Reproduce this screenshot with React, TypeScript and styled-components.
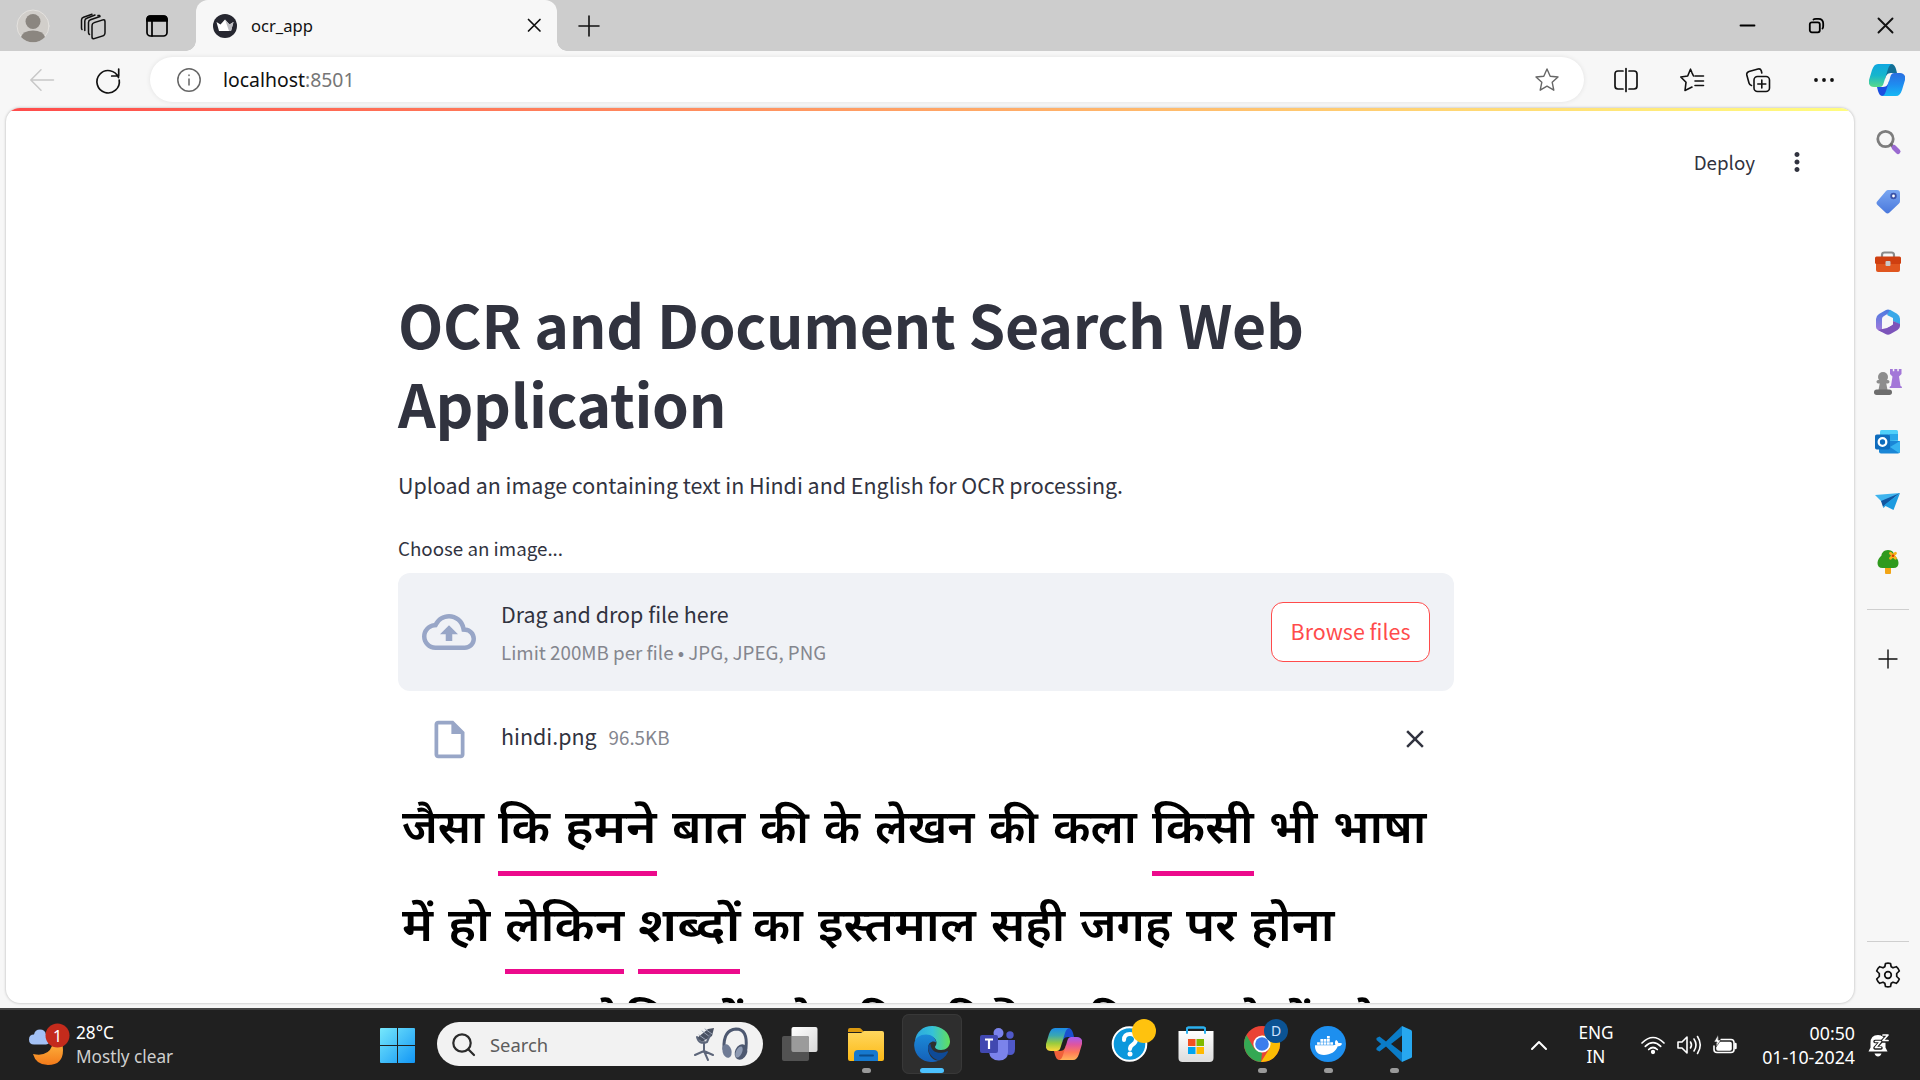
import React from 'react';
import styled, { createGlobalStyle } from 'styled-components';
import { MdOutlineCloudUpload, MdOutlineInsertDriveFile, MdMoreVert, MdClose } from 'react-icons/md';
import { FaDocker } from 'react-icons/fa';

const ui = '"Noto Sans", "Open Sans", sans-serif';
const page = '"Noto Sans CJK JP", "Noto Sans", sans-serif';

const GlobalStyle = createGlobalStyle`
  * { box-sizing: border-box; }
  body { margin: 0; background: #f7f7f7; overflow: hidden; }
  svg { display: block; flex: none; }
`;

const Screen = styled.div`
  width: 1920px; height: 1080px; display: flex; flex-direction: column;
  overflow: hidden; background: #f7f7f7; font-family: ${ui};
`;

/* ---------- browser chrome ---------- */
const TabStrip = styled.header`
  height: 51px; flex: none; display: flex; background: #cdcdcd;
`;
const Slot = styled.div<{ $w: number }>`
  width: ${p => p.$w}px; height: 100%; flex: none; display: flex;
  align-items: center; justify-content: center;
`;
const Tab = styled.div`
  width: 361px; height: 51px; margin-left: 3px; padding: 0 17px; display: flex; align-items: center;
  background: #f7f7f7; border-radius: 12px 12px 0 0; position: relative;
  &::before, &::after {
    content: ''; position: absolute; bottom: 0; width: 10px; height: 10px;
  }
  &::before { left: -10px; background: radial-gradient(circle at 0 0, transparent 9.5px, #f7f7f7 10px); }
  &::after { right: -10px; background: radial-gradient(circle at 100% 0, transparent 9.5px, #f7f7f7 10px); }
`;
const TabTitle = styled.span`
  flex: 1; margin-left: 14px; font-size: 16.6px; line-height: 22px; color: #111;
`;
const Spacer = styled.div`flex: 1;`;
const Toolbar = styled.nav`
  height: 57px; flex: none; display: flex; align-items: center; background: #f7f7f7;
`;
const AddressBar = styled.div`
  width: 1434px; height: 45px; margin-left: 18px; padding: 0 25px 0 27px; display: flex; align-items: center;
  border-radius: 23px; background: #fff; box-shadow: 0 0 5px rgba(0,0,0,.09);
`;
const Url = styled.span`
  flex: 1; margin-left: 22px; font-size: 19.4px; line-height: 26px; color: #101010;
  span { color: #767676; }
`;
const Middle = styled.div`height: 900px; flex: none; display: flex;`;
const Frame = styled.div`flex: 1; padding: 0 1px 5px 6px; display: flex;`;
const PageCard = styled.main`
  flex: 1; height: 895px; overflow: hidden; background: #fff;
  border-radius: 14px; box-shadow: 0 0 3px rgba(0,0,0,.28);
  display: flex; flex-direction: column;
`;
const Decoration = styled.div`
  height: 3px; flex: none; background: linear-gradient(90deg, #ff4b4b, #fffd80);
`;
const AppHeader = styled.div`
  height: 102px; flex: none; padding-right: 42px; display: flex; align-items: center; justify-content: flex-end;
`;
const Deploy = styled.span`
  margin-right: 27px; font: 400 18.75px/28px ${page}; color: #31333f;
`;

/* ---------- sidebar ---------- */
const Sidebar = styled.aside`
  width: 65px; flex: none; display: flex; flex-direction: column; align-items: center;
`;
const SideItem = styled.div<{ $h?: number }>`
  height: ${p => p.$h ?? 60}px; flex: none; display: flex; align-items: center; justify-content: center;
`;
const Rule = styled.div`width: 42px; height: 1px; flex: none; background: #cfcfcf;`;

/* ---------- page content ---------- */
const Column = styled.section`
  width: 1056px; margin-left: 392px; display: flex; flex-direction: column;
  font-family: ${page}; color: #31333f;
`;
const Title = styled.h1`
  margin: 71px 0 0; font-size: 58.9px; line-height: 79.2px; font-weight: 700; letter-spacing: -0.3px;
`;
const Lead = styled.p`margin: 24px 0 0; font-size: 21.45px; line-height: 38px;`;
const Label = styled.label`margin-top: 28px; font-size: 18.75px; line-height: 32px;`;
const Dropzone = styled.div`
  height: 118px; margin-top: 9px; padding: 0 24px; display: flex; align-items: center;
  border-radius: 12px; background: #f0f2f6;
`;
const DropText = styled.div`
  flex: 1; margin-left: 25px; display: flex; flex-direction: column; gap: 1px;
`;
const Strong = styled.span`font-size: 21.45px; line-height: 38px; color: #31333f;`;
const Small = styled.span`font-size: 18.75px; line-height: 36px; color: #84868e;`;
const Browse = styled.button`
  width: 159px; height: 60px; padding: 0 0 2px; border: 1.5px solid #ff4b4b; border-radius: 12px;
  background: #fff; color: #ff4b4b; font: 400 21.45px/36px ${page};
`;
const FileRow = styled.div`
  height: 66px; margin-top: 15px; padding: 0 24px 0 29px; display: flex; align-items: center;
`;
const FileName = styled.div`
  flex: 1; margin: 0 0 6px 29px; display: flex; align-items: baseline; gap: 12px;
`;

/* ---------- the uploaded picture ---------- */
const Scan = styled.figure`
  margin: 21px 0 0; padding-left: 4px; display: flex; flex-direction: column; filter: blur(0.7px);
`;
const ScanLine = styled.div`height: 98px; flex: none; display: flex; align-items: flex-start;`;
const Phrase = styled.div<{ $ml: number; $under?: boolean }>`
  height: 83px; margin-left: ${p => p.$ml}px; display: flex; gap: 15px;
  border-bottom: 5px solid ${p => (p.$under ? '#ec0a8c' : 'transparent')};
`;
const Word = styled.span<{ $w: number }>`
  width: ${p => p.$w}px; flex: none; white-space: nowrap; color: #000;
  font: 600 46px/78px "Noto Sans Devanagari", "Noto Sans", sans-serif;
  span { display: inline-block; transform-origin: 0 50%; }
`;

/* ---------- taskbar ---------- */
const Taskbar = styled.footer`
  height: 72px; flex: none; display: flex; align-items: stretch;
  background: #202020; border-top: 2px solid #444;
`;
const Weather = styled.div`
  width: 347px; padding-left: 28px; display: flex; align-items: center; gap: 10px;
`;
const Lines = styled.div<{ $align?: string; $size?: number }>`
  display: flex; flex-direction: column; text-align: ${p => p.$align ?? 'left'};
  font-size: ${p => p.$size ?? 17.2}px; line-height: 24px; color: #fff; white-space: nowrap;
`;
const Muted = styled.span`color: #cfcfcf;`;
const SearchPill = styled.div`
  width: 326px; height: 44px; margin: 12px 4px 0 13px; padding: 0 14px 0 15px; display: flex; align-items: center;
  border-radius: 22px; background: #f2f2f2;
`;
const SearchText = styled.span`flex: 1; margin-left: 15px; font-size: 18.4px; color: #5c5c5c;`;
const AppTile = styled.div<{ $active?: boolean }>`
  width: 60px; height: 60px; margin: 4px 3px 0; border-radius: 7px; flex: none;
  display: flex; flex-direction: column; align-items: center; padding-top: 12px;
  background: ${p => (p.$active ? '#2e2e2e' : 'transparent')};
  box-shadow: ${p => (p.$active ? 'inset 0 0 0 1px #383838' : 'none')};
`;
const Marker = styled.i<{ $active?: boolean }>`
  width: ${p => (p.$active ? 24 : 9)}px; height: 5px; margin-top: 6px; border-radius: 3px;
  background: ${p => (p.$active ? '#4cc2ff' : '#9a9a9a')};
`;

type Ink = { w: number; h: number; vb?: string; children: React.ReactNode; stroke?: string; sw?: number };
const Draw = ({ w, h, vb, children, stroke, sw = 1.5 }: Ink) => (
  <svg width={w} height={h} viewBox={vb ?? `0 0 ${w} ${h}`} fill="none" overflow="visible"
    stroke={stroke} strokeWidth={stroke ? sw : undefined} strokeLinecap="round" strokeLinejoin="round">
    {children}
  </svg>
);

const Plus = ({ s, sw = 1.6 }: { s: number; sw?: number }) => (
  <Draw w={s} h={s} stroke="#111" sw={sw}><path d={`M${s / 2} 0V${s}M0 ${s / 2}H${s}`} /></Draw>
);
const Cross = ({ s, sw = 1.7 }: { s: number; sw?: number }) => (
  <Draw w={s} h={s} stroke="#111" sw={sw}><path d={`M0.5 0.5L${s - 0.5} ${s - 0.5}M${s - 0.5} 0.5L0.5 ${s - 0.5}`} /></Draw>
);

/* copilot ribbon, shared by the toolbar and the taskbar */
const Ribbon = ({ id, w, h, a, b, c, d }: { id: string; w: number; h: number; a: string[]; b: string[]; c: string; d: string }) => (
  <svg width={w} height={h} viewBox="0 0 36 32">
    <defs>
      <linearGradient id={id + 'a'} x1="0" y1="0" x2="0" y2="1">{a.map((x, i) => <stop key={i} offset={i / (a.length - 1)} stopColor={x} />)}</linearGradient>
      <linearGradient id={id + 'b'} x1="0" y1="0" x2="0" y2="1">{b.map((x, i) => <stop key={i} offset={i / (b.length - 1)} stopColor={x} />)}</linearGradient>
    </defs>
    <path d="M17 0h5c3 0 4 2 5 5l1 4h-6c-4 0-5 3-6 6z" fill={c} />
    <path d="M19 32h-5c-3 0-4-2-5-5l-1-4h6c4 0 5-3 6-6z" fill={d} />
    <path d="M9 0h15c-3 0-4 2-5 5l-4 13c-1 4-2 5-5 5H5c-4 0-6-3-5-7L3 6C4.500 2 6 0 9 0z" fill={`url(#${id}a)`} />
    <path d="M27 32H12c3 0 4-2 5-5l4-13c1-4 2-5 5-5h5c4 0 6 3 5 7l-3 10c-1.500 4-3 6-6 6z" fill={`url(#${id}b)`} />
  </svg>
);

const Star = 'M12 1l3.200 7.200 7.800.8-5.800 5.300 1.600 7.900L12 18.200l-6.800 4 1.600-7.900L1 9l7.800-.8z';

const sideIcons = [
  <Draw w={26} h={26} key="search">
    <circle cx="10.500" cy="10" r="7.700" stroke="#7d7d7d" strokeWidth="2.800" />
    <path d="M16 15.500l3 3" stroke="#6a6a6a" strokeWidth="3" /><path d="M19 18.500l4 4" stroke="#9a6ad0" strokeWidth="5" />
  </Draw>,
  <Draw w={26} h={26} key="tag">
    <defs><linearGradient id="tg" x1="0" y1="0" x2="0" y2="1"><stop stopColor="#7aa7f2" /><stop offset="1" stopColor="#4a78dc" /></linearGradient></defs>
    <path d="M13 1h9q3 0 3 3v8q0 1.500-1 2.500l-9.500 9q-2 2-4 0l-8-7.500q-2-2 0-4L11 2q1-1 2-1z" fill="url(#tg)" />
    <circle cx="18.500" cy="7" r="2.300" fill="#fff" stroke="#3a52a8" strokeWidth="1.800" />
  </Draw>,
  <Draw w={28} h={22} key="tools">
    <path d="M8 6V4q0-2.500 2.500-2.500h7Q20 1.500 20 4v2" stroke="#8a8a8a" strokeWidth="2.200" />
    <rect x="2" y="10" width="24" height="11" rx="2" fill="#e0561f" /><rect x="1" y="5.500" width="26" height="7.500" rx="1.500" fill="#cf3f10" />
    <rect x="11.500" y="10" width="5" height="5" rx="1" fill="#c9c9c9" />
  </Draw>,
  <Draw w={24} h={26} key="m365">
    <defs><linearGradient id="m1" x1="0" y1="0" x2="0" y2="1"><stop stopColor="#4a7be0" /><stop offset="1" stopColor="#a779dc" /></linearGradient></defs>
    <path d="M10 1L3 5Q0 7 0 10v8q0 2 2 3l4 2V10q0-2 2-3l6-3.500V1q-2-1-4 0z" fill="url(#m1)" />
    <path d="M14 .8l7 4q3 2 3 5v6L17 12V9L11 6z" fill="#39a8e8" /><path d="M24 15v2q0 2.500-2.500 4l-7 4q-2.500 1.300-5 0L2 21l9-2 6-3.500V12z" fill="#7c54ba" />
    <circle cx="12" cy="13" r="4.700" fill="#f7f7f7" />
  </Draw>,
  <Draw w={28} h={28} key="games">
    <path d="M16 1v5l2.500 2.500L17 18q-1.500 0-1.500 2H28q0-2-1.500-2L25 8.500 27.500 6V1h-2.700v2.300h-1.500V1h-3v2.300h-1.500V1z" fill="#a377d8" />
    <g fill="#8d8d8d"><circle cx="9" cy="9" r="5" /><rect x="2.500" y="12" width="13" height="3.500" rx="1.700" /><path d="M6 14h6l1.500 8h-9z" /></g>
    <rect x="0" y="21.500" width="18" height="5.500" rx="2.700" fill="#6d6d6d" />
  </Draw>,
  <Draw w={25} h={24} key="outlook">
    <rect x="5" y="0" width="18" height="14" rx="1.500" fill="#50d0fa" /><rect x="14" y="4" width="9" height="6" fill="#2aa7ea" />
    <path d="M4 10l21 1v10.500q0 2-2 2H6q-2 0-2-2z" fill="#1a86d6" /><path d="M25 11l-10 6 9 6q1-.5 1-1.500z" fill="#36b3f0" />
    <rect x="0" y="4.500" width="15" height="15" rx="1.800" fill="#0f6cbd" /><circle cx="7.500" cy="12" r="3.800" stroke="#fff" strokeWidth="2.300" />
  </Draw>,
  <Draw w={26} h={20} key="plane">
    <path d="M0 3l25-2-17 10z" fill="#3fb4ee" /><path d="M6 9L25 1 8 15z" fill="#1256a0" /><path d="M8 15l2.500-3L25 1l-6.500 17-8-4-2 2z" fill="#1d9be0" />
  </Draw>,
  <Draw w={22} h={26} key="tree">
    <path d="M8 17h6v7q0 1-1 1H9q-1 0-1-1z" fill="#f2a516" />
    <path d="M11 1c4 0 6.500 3 6.500 5.500C19.500 8 21.500 11 21.500 14q0 5-5 5H5.500q-5 0-5-5c0-3 2-6 4-7.500C4.500 4 7 1 11 1z" fill="#2f9a1e" />
    <path d="M13.500 4.300l5 5m0-5l-5 5" stroke="#f8b21a" strokeWidth="2.800" /><circle cx="16" cy="6.800" r="1.300" fill="#d83b01" />
  </Draw>,
];

/* natural width of each glyph run is stretched to the width it has in the scan */
const Hindi = ({ w, children }: { w: number; children: string }) => {
  const ref = React.useRef<HTMLSpanElement>(null);
  const [k, setK] = React.useState(1);
  React.useLayoutEffect(() => {
    if (ref.current) setK(w / ref.current.offsetWidth);
  }, [w]);
  return <Word $w={w}><span ref={ref} style={{ transform: `scaleX(${k})` }}>{children}</span></Word>;
};

type Run = { ml: number; under?: boolean; words: [string, number][] };
const scan: Run[][] = [
  [
    { ml: 0, words: [['जैसा', 82]] },
    { ml: 14, under: true, words: [['कि', 52], ['हमने', 92]] },
    { ml: 15, words: [['बात', 73], ['की', 49], ['के', 36], ['लेखन', 99], ['की', 49], ['कला', 84]] },
    { ml: 15, under: true, words: [['किसी', 102]] },
    { ml: 15, words: [['भी', 49], ['भाषा', 94]] },
  ],
  [
    { ml: 0, words: [['में', 31], ['हो', 42]] },
    { ml: 15, under: true, words: [['लेकिन', 119]] },
    { ml: 14, under: true, words: [['शब्दों', 102]] },
    { ml: 13, words: [['का', 50], ['इस्तमाल', 158], ['सही', 74], ['जगह', 91], ['पर', 50], ['होना', 84]] },
  ],
  [
    { ml: 192, words: [['के', 36]] },
    { ml: -4, words: [['कि', 52]] },
    { ml: 34, words: [['में', 31]] },
    { ml: 45, words: [['के', 36]] },
    { ml: 22, words: [['की', 49]] },
    { ml: 39, words: [['की', 49]] },
    { ml: 1, words: [['है', 42]] },
    { ml: 51, words: [['की', 49]] },
    { ml: 111, words: [['के', 36]] },
    { ml: 6, words: [['में', 31]] },
    { ml: 41, words: [['के', 36]] },
  ],
];

const EdgeLogo = () => (
  <svg width="36" height="36" viewBox="0 0 36 36">
    <defs>
      <linearGradient id="e1" x1="0" x2="1"><stop stopColor="#2aa6e0" /><stop offset=".5" stopColor="#35c1d8" /><stop offset="1" stopColor="#62e05a" /></linearGradient>
      <linearGradient id="e2" x1="0" y1="0" x2="0" y2="1"><stop stopColor="#1b8ad8" /><stop offset="1" stopColor="#1560b8" /></linearGradient>
    </defs>
    <path d="M1 15C2 6 9 0 18 0c10 0 18 7 18 15.500 0 5-4 8.500-9 8.500-4 0-6-1.500-6-3 0-1 1.500-1.500 1.500-4.500 0-3.500-3.500-6.500-8-6.500C8 10 3 12 1 15z" fill="url(#e1)" />
    <path d="M.2 20C-.3 12 6 8.500 12 8.500c5.500 0 10 3.500 10 8-2-2-8-1-8 6 0 6 5 13 11 12-10 4.500-24-1-24.800-14.500z" fill="url(#e2)" />
    <path d="M14 21c0 7 5.500 12 11 13.500 4-1.300 7.500-5 9-8.500.3-.8-.5-1-1-.7C26 28.500 17 27 16.500 18q-2.500.5-2.500 3z" fill="#0f4a96" />
  </svg>
);

const apps: { id: string; icon: React.ReactNode; run?: boolean; active?: boolean }[] = [
  { id: 'taskview', icon: <Draw w={36} h={36}><defs><linearGradient id="tv" x2="1" y2="1"><stop stopColor="#fff" /><stop offset="1" stopColor="#d8d8d8" /></linearGradient></defs><rect x="9.500" y="1" width="26" height="25" rx="2" fill="url(#tv)" /><rect x="0" y="10" width="27" height="25" rx="2" fill="#5c5c5c" fillOpacity=".85" /><path d="M9.500 10H25q2 0 2 2v14H11.500q-2 0-2-2z" fill="#9b9b9b" /></Draw> },
  { id: 'explorer', run: true, icon: <Draw w={36} h={36}><defs><linearGradient id="ex" x2="0" y2="1"><stop stopColor="#ffd75e" /><stop offset="1" stopColor="#fcb916" /></linearGradient></defs><path d="M0 4q0-2 2-2h9q1.500 0 2.500 1.200L16 6H0z" fill="#dc9a10" /><path d="M0 7h13l3-2h18q2 0 2 2v26q0 2-2 2H2q-2 0-2-2z" fill="url(#ex)" /><path d="M6 35V28q0-4 4-4h16q4 0 4 4v7z" fill="#1679cf" /><path d="M12 29.500h13" stroke="#0b4d8c" strokeWidth="2" /></Draw> },
  { id: 'edge', run: true, active: true, icon: <EdgeLogo /> },
  { id: 'teams', icon: <Draw w={36} h={36}><circle cx="18.500" cy="7" r="5" fill="#7b83eb" /><circle cx="30" cy="9" r="3.700" fill="#5059c9" /><path d="M26 14h9v9q0 6-5 6t-5-5z" fill="#5059c9" /><path d="M9 14h19v12q0 8.500-9 8.500T9 26z" fill="#7b83eb" /><rect x="0" y="9" width="18" height="18" rx="2" fill="#4148b0" /><path d="M5 13.500h8M9 13.500v9.500" stroke="#fff" strokeWidth="2.200" strokeLinecap="butt" /></Draw> },
  { id: 'copilot', icon: <Ribbon id="tc" w={36} h={36} a={['#1b8be8', '#3ba8b0', '#9bcc3c', '#ffd83a']} b={['#a45cf0', '#e0559f', '#ff7a58', '#ffb35a']} c="#1a4fd0" d="#f0603a" /> },
  { id: 'help', icon: <Draw w={36} h={36}><circle cx="17.500" cy="18" r="16.800" fill="#0b98dc" stroke="#fff" strokeWidth="2" /><path d="M12 14q0-6 6-6t6 5.500q0 3-3.500 5.200Q18 20.300 18 23" stroke="#fff" strokeWidth="4" /><circle cx="18" cy="28" r="2.500" fill="#fff" /><circle cx="32" cy="5" r="12" fill="#ffc20e" /></Draw> },
  { id: 'store', icon: <Draw w={36} h={36}><defs><linearGradient id="st" x2="0" y2="1"><stop stopColor="#fff" /><stop offset="1" stopColor="#dcdcdc" /></linearGradient></defs><path d="M9 8V3q0-1.500 1.500-1.500h15Q27 1.500 27 3v5" stroke="#2bb0ee" strokeWidth="2" /><path d="M0.500 5h35v27q0 4-4 4h-27q-4 0-4-4z" fill="url(#st)" /><path d="M9 7V3q0-1.500 1.500-1.500h15Q27 1.500 27 3v4" stroke="#2bb0ee" strokeWidth="2" /><path fill="#f25022" d="M10 13h7.500v7H10z" /><path fill="#7fba00" d="M18.500 13H26v7h-7.500z" /><path fill="#00a4ef" d="M10 21h7.500v7H10z" /><path fill="#ffb900" d="M18.500 21H26v7h-7.500z" /></Draw> },
  { id: 'chrome', run: true, icon: <Draw w={36} h={36}><circle cx="18" cy="18" r="18" fill="#ea4335" /><path d="M2.400 9L10.200 22.500 18 27l-1 9A18 18 0 0 1 2.400 9z" fill="#34a853" /><path d="M18 9.500h15.800A18 18 0 0 1 17 36l8.500-13.500z" fill="#fbbc04" /><circle cx="18" cy="18" r="8.600" fill="#fff" /><circle cx="18" cy="18" r="6.800" fill="#3b7ded" /><circle cx="32" cy="5" r="12" fill="#0b5394" /><text x="32" y="10" textAnchor="middle" fontSize="14" fill="#cfe2ff" fontFamily='"Noto Sans", sans-serif'>D</text></Draw> },
  { id: 'docker', run: true, icon: <Draw w={36} h={36}><circle cx="18" cy="18" r="18" fill="#1d8fef" /><g transform="translate(5 6)"><FaDocker size={27} color="#fff" /></g></Draw> },
  { id: 'vscode', run: true, icon: <Draw w={36} h={36}><path d="M26 0L10 15.500 3.500 10.500 0.500 12v2L5.200 18 0.500 22v2l3 1.500 6.500-5L26 36l2-9V9z" fill="#0a7cc7" /><path d="M26 9.500L15 18l11 8.500z" fill="#202020" /><path d="M26 0l9 4q1 .5 1 1.500v25q0 1-1 1.500l-9 4z" fill="#27a8f0" /></Draw> },
];

export default function App() {
  return (
    <Screen>
      <GlobalStyle />
      <TabStrip>
        <Slot $w={66}>
          <Draw w={34} h={34}><circle cx="17" cy="17" r="16" fill="#d1ceca" stroke="#e4e2df" /><circle cx="17" cy="12.500" r="7.500" fill="#8b8680" /><path d="M5 28Q7 21.500 17 21.500T29 28Q24 33.300 17 33.300T5 28z" fill="#8b8680" /></Draw>
        </Slot>
        <Slot $w={54}>
          <Draw w={24} h={24} stroke="#111"><rect x="11" y="7" width="13" height="16" rx="2.500" transform="skewY(-18) translate(0 6)" /><path d="M7.500 18.500V8.500q0-2 2-2.700L19 2.500q0-1.500-2-1M3.800 16.500V7q0-2 2-2.700L14 1M1 15.500q-.5-.5-.5-1.500V6q0-2 2-2.700L11 .3M7.500 18.500q0 1.500 1 2" /></Draw>
        </Slot>
        <Slot $w={73}>
          <Draw w={22} h={22} stroke="#000" sw={1.700}><rect x="1" y="1" width="20" height="20" rx="3.500" /><path d="M1 6V4.500Q1 1 4.500 1h13Q21 1 21 4.500V6z" fill="#000" /><path d="M6 6v15" /></Draw>
        </Slot>
        <Tab>
          <Draw w={24} h={24}><circle cx="12" cy="12" r="12" fill="#262730" /><path d="M3.500 8l4 2.500L12 5.500l4.500 5 4-2.500-2.500 9H6z" fill="#fff" /><path d="M12 5.500l4.500 5 4-2.500-2.500 9h-2z" fill="#bdbdc2" /></Draw>
          <TabTitle>ocr_app</TabTitle>
          <Cross s={12.500} />
        </Tab>
        <Slot $w={64}><Plus s={20} /></Slot>
        <Spacer />
        <Slot $w={69}><Draw w={15} h={15} stroke="#000" sw={1.800}><path d="M.5 7.500h14" /></Draw></Slot>
        <Slot $w={69}><Draw w={15} h={15} stroke="#000" sw={1.800}><rect x="0.800" y="4.300" width="10" height="10" rx="2" /><path d="M4.500 1.500Q5 .8 7 .8h2.500Q14.200.8 14.200 5.500V8q0 2-.7 2.500" /></Draw></Slot>
        <Slot $w={69}><Cross s={15} sw={1.900} /></Slot>
      </TabStrip>

      <Toolbar>
        <Slot $w={84}><Draw w={24} h={22} stroke="#c8c8c8"><path d="M23.500 11H.8M11 .8L.8 11 11 21.200" /></Draw></Slot>
        <Slot $w={48}><Draw w={24} h={24} stroke="#111" sw={1.700}><path d="M22.500 9.500A11.200 11.200 0 1 0 23.200 12M22.700 1v7h-7" /></Draw></Slot>
        <AddressBar>
          <Draw w={24} h={24} stroke="#666" sw={1.500}><circle cx="12" cy="12" r="11.200" /><path d="M12 11v6M12 7v.4" /></Draw>
          <Url>localhost<span>:8501</span></Url>
          <Draw w={24} h={24} stroke="#666" sw={1.400}><path d={Star} /></Draw>
        </AddressBar>
        <Slot $w={83}><Draw w={24} h={24} stroke="#111" sw={1.700}><path d="M9 3H4Q1 3 1 6v12q0 3 3 3h5M15 3h5q3 0 3 3v12q0 3-3 3h-5M12 .5v23" /></Draw></Slot>
        <Slot $w={50}><Draw w={24} h={24} stroke="#111" sw={1.600}><path d="M13.500 8L12 4.800 10.500 1.200 7.700 8 .8 9l5.200 5.300-1 8.200 7-3.500M15 8h8.500M15 13h8.500M15 17.500h8.500" /></Draw></Slot>
        <Slot $w={82}><Draw w={24} h={24} stroke="#111" sw={1.600}><rect x="8" y="8.500" width="15.500" height="15" rx="3.500" /><path d="M15.800 12v8M11.800 16h8M5.500 17.500Q3.500 17 3 15L.8 7Q.3 4.500 3 3.500L12 1q2.500-.6 3.300 1.800L15.800 5" /></Draw></Slot>
        <Slot $w={50}><Draw w={20} h={4}><g fill="#111"><circle cx="2" cy="2" r="1.900" /><circle cx="10" cy="2" r="1.900" /><circle cx="18" cy="2" r="1.900" /></g></Draw></Slot>
        <Spacer />
        <Slot $w={66}><Ribbon id="cp" w={36} h={32} a={['#10a7e0', '#16b6cc', '#58d98a']} b={['#2b6fe0', '#1e8cf0', '#16b8f4']} c="#136f96" d="#1b4fe0" /></Slot>
      </Toolbar>

      <Middle>
        <Frame>
          <PageCard>
            <Decoration />
            <AppHeader><Deploy>Deploy</Deploy><MdMoreVert size={30} color="#31333f" /></AppHeader>
            <Column>
              <Title>OCR and Document Search Web Application</Title>
              <Lead>Upload an image containing text in Hindi and English for OCR processing.</Lead>
              <Label>Choose an image...</Label>
              <Dropzone>
                <MdOutlineCloudUpload size={54} color="#98a6c7" />
                <DropText>
                  <Strong>Drag and drop file here</Strong>
                  <Small>Limit 200MB per file • JPG, JPEG, PNG</Small>
                </DropText>
                <Browse>Browse files</Browse>
              </Dropzone>
              <FileRow>
                <MdOutlineInsertDriveFile size={45} color="#98a6c7" />
                <FileName><Strong>hindi.png</Strong><Small>96.5KB</Small></FileName>
                <MdClose size={30} color="#31333f" />
              </FileRow>
              <Scan>
                {scan.map((line, i) => (
                  <ScanLine key={i}>
                    {line.map((run, j) => (
                      <Phrase key={j} $ml={run.ml} $under={run.under}>
                        {run.words.map(([text, w], n) => <Hindi key={n} w={w}>{text}</Hindi>)}
                      </Phrase>
                    ))}
                  </ScanLine>
                ))}
              </Scan>
            </Column>
          </PageCard>
        </Frame>
        <Sidebar>
          <SideItem $h={4} />
          {sideIcons.map((icon, i) => <SideItem key={i}>{icon}</SideItem>)}
          <SideItem $h={17} />
          <Rule />
          <SideItem $h={97}><Plus s={18} sw={1.400} /></SideItem>
          <Spacer />
          <Rule />
          <SideItem $h={66}>
            <Draw w={26} h={26} stroke="#111" sw={1.700}><circle cx="13" cy="13" r="3.300" /><path d="M10.500 1.500Q13 .7 15.500 1.500L16.200 4.800 18 5.800 21.300 4.700Q23.500 6.500 24.300 9L21.700 11.500V14.500L24.300 17Q23.500 19.500 21.300 21.300L18 20.200 16.200 21.200 15.500 24.500Q13 25.300 10.500 24.500L9.800 21.200 8 20.200 4.700 21.300Q2.500 19.500 1.700 17L4.300 14.500V11.500L1.700 9Q2.500 6.500 4.700 4.700L8 5.800 9.800 4.800Z" /></Draw>
          </SideItem>
        </Sidebar>
      </Middle>

      <Taskbar>
        <Weather>
          <Draw w={38} h={44}>
            <defs><linearGradient id="mo" x2="0" y2="1"><stop stopColor="#ffc64a" /><stop offset="1" stopColor="#f47a1a" /></linearGradient></defs>
            <path d="M23 12q12 3 12 15 0 15-15 15-12 0-15-11 15 3 19-8 1-6-1-11z" fill="url(#mo)" />
            <path d="M6 21.500q-5 0-5-5T6 11.500q1-5 6-5t6 5q4 .5 4 5t-4 5z" fill="#a3c1f5" />
            <circle cx="29.500" cy="12.500" r="12" fill="#c42b1c" /><text x="29.500" y="18.500" textAnchor="middle" fontSize="16" fill="#fff" fontFamily='"Noto Sans", sans-serif'>1</text>
          </Draw>
          <Lines><span>28°C</span><Muted>Mostly clear</Muted></Lines>
        </Weather>
        <Slot $w={100}>
          <Draw w={35} h={35}>
            <defs><linearGradient id="wn" gradientUnits="userSpaceOnUse" x1="0" y1="0" x2="35" y2="35"><stop stopColor="#76e8fc" /><stop offset="1" stopColor="#1296f5" /></linearGradient></defs>
            <path d="M1 0h16v17H0V1q0-1 1-1zM18 0h16q1 0 1 1v16H18zM0 18h17v17H1q-1 0-1-1zM18 18h17v16q0 1-1 1H18z" fill="url(#wn)" />
          </Draw>
        </Slot>
        <SearchPill style={{ marginLeft: -10 }}>
          <Draw w={23} h={23} stroke="#2b2b2b" sw={2.200}><circle cx="10" cy="10" r="8.700" /><path d="M16.500 16.500l5.500 5.500" /></Draw>
          <SearchText>Search</SearchText>
          <Draw w={56} h={34}>
            <path d="M4 11L15 2l6-1-2 8-10 6z" fill="#4a5263" /><path d="M9 4l8 6M12 2l7 5M6 8l7 5" stroke="#9aa3b5" strokeWidth="1" />
            <path d="M4 10q2 8 10 5l3-7M11 15v10M11 24l-9 4M11 24l9 4M11 24l4 9" stroke="#5d667a" strokeWidth="2" />
            <path d="M31 22Q30 3 43 2q12 0 10 19" stroke="#4d5870" strokeWidth="3" /><ellipse cx="34" cy="24" rx="4.500" ry="7" fill="#6f7b95" transform="rotate(-15 34 24)" /><ellipse cx="48" cy="25" rx="6" ry="8" fill="#4d5870" transform="rotate(25 48 25)" /><ellipse cx="46" cy="25" rx="3" ry="6" fill="#8e9ab2" transform="rotate(25 46 25)" />
          </Draw>
        </SearchPill>
        {apps.map(a => (
          <AppTile key={a.id} $active={a.active}>{a.icon}{a.run && <Marker $active={a.active} />}</AppTile>
        ))}
        <Spacer />
        <Slot $w={42}><Draw w={16} h={9} stroke="#fff" sw={2}><path d="M1 8l7-7 7 7" /></Draw></Slot>
        <Slot $w={72}><Lines $align="center"><span>ENG</span><span>IN</span></Lines></Slot>
        <Slot $w={42}><Draw w={24} h={18} stroke="#fff" sw={1.700}><path d="M1 7q11-11 22 0M4.300 10.300q7.700-7.500 15.400 0M7.700 13.500q4.300-4 8.600 0" /><circle cx="12" cy="16" r="1.300" fill="#fff" /></Draw></Slot>
        <Slot $w={30}><Draw w={24} h={20} stroke="#fff" sw={1.600}><path d="M1 7h4l5-5v16l-5-5H1zM13.500 7q2 3 0 6M17 4q4 6 0 12M20.500 1.500q5.500 8.500 0 17" /></Draw></Slot>
        <Slot $w={42}><Draw w={25} h={20} stroke="#fff" sw={1.600}><path d="M8 4.500h10q3 0 3 3v7q0 3-3 3H4q-3 0-3-3V11" /><rect x="4" y="7.500" width="14" height="7.500" rx="1" fill="#fff" /><path d="M22.500 9v4" strokeWidth="2.400" /><path d="M5 0L1 7h3l-1 5 5-7H5.500z" fill="#fff" stroke="#202020" strokeWidth=".6" /></Draw></Slot>
        <Slot $w={109} style={{ justifyContent: 'flex-end' }}><Lines $align="right" $size={17.8}><span>00:50</span><span>01-10-2024</span></Lines></Slot>
        <Slot $w={65} style={{ justifyContent: 'flex-start', paddingLeft: 13 }}>
          <Draw w={21} h={24}>
            <path d="M10 2q7.500 0 7.500 8v4.500l2 4H.5l2-4V10Q2.500 2 10 2z" fill="#fff" /><path d="M6.500 20.500h7q-1 3-3.500 3t-3.500-3z" fill="#fff" />
            <path d="M7 8.500h6l-6 6.500h6M14.500 1.500h6l-6 6.500h6" stroke="#202020" strokeWidth="3.500" /><path d="M7.500 8.500h5L7.500 14.500h5M15 2h5l-5 5.500h5" stroke="#fff" strokeWidth="1.700" />
          </Draw>
        </Slot>
      </Taskbar>
    </Screen>
  );
}
